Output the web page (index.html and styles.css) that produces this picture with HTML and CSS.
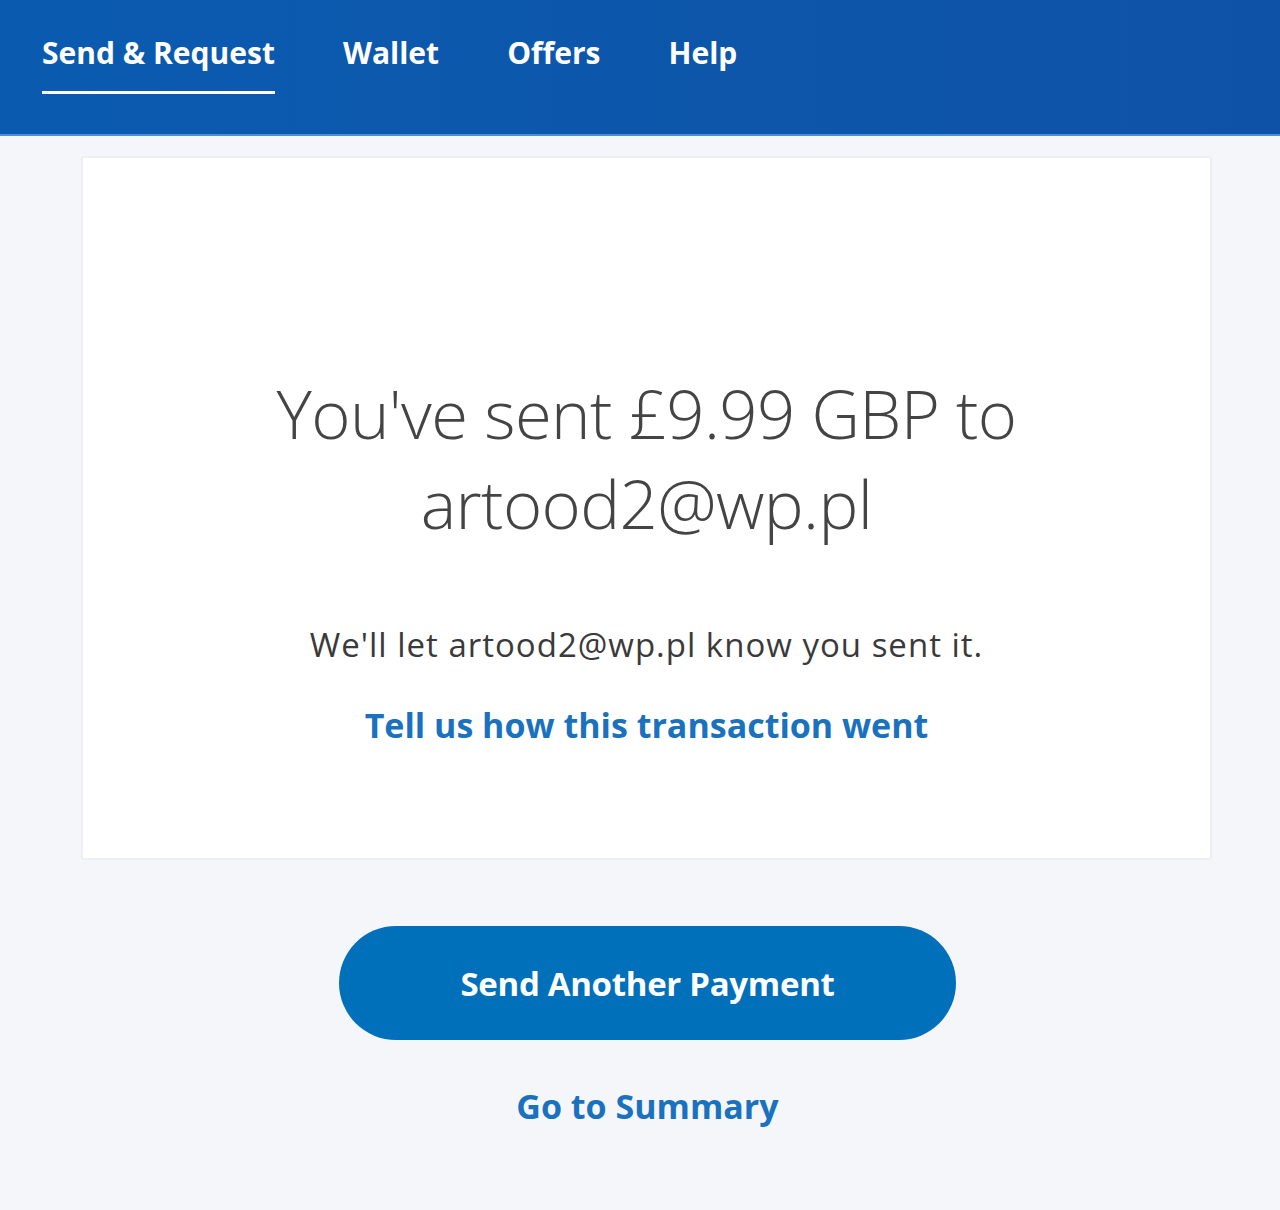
FILE: index.html
```html
<!DOCTYPE html>
<html lang="en">
<head>
<meta charset="utf-8">
<title>Payment sent</title>
<link rel="stylesheet" href="styles.css">
</head>
<body>
<header class="topbar">
  <nav class="nav">
    <a class="nav-item active" href="#">Send &amp; Request</a>
    <a class="nav-item" href="#">Wallet</a>
    <a class="nav-item" href="#">Offers</a>
    <a class="nav-item" href="#">Help</a>
  </nav>
</header>
<main class="main">
  <section class="card">
    <h1 class="headline">You've sent £9.99 GBP to<br>artood2@wp.pl</h1>
    <p class="note">We'll let artood2@wp.pl know you sent it.</p>
    <a class="feedback" href="#">Tell us how this transaction went</a>
  </section>
  <div class="actions">
    <a class="btn-primary" href="#">Send Another Payment</a>
    <a class="summary" href="#">Go to Summary</a>
  </div>
</main>
</body>
</html>
```
FILE: styles.css
```css
* { box-sizing: border-box; }
html, body { margin: 0; padding: 0; }
body {
  background: #f5f6fa;
  font-family: "Open Sans", "Noto Sans", sans-serif;
  width: 1280px;
  min-height: 1210px;
}
a { text-decoration: none; }

.topbar {
  height: 136px;
  background: linear-gradient(90deg, #0a5bb0 0%, #0d56aa 60%, #0e52a7 100%);
  border-bottom: 2px solid #4b8fd6;
}
.nav {
  display: flex;
  gap: 68px;
  padding-left: 42px;
  height: 100%;
}
.nav-item {
  color: #fff;
  font-weight: 700;
  font-size: 30px;
  line-height: 1;
  padding-top: 38px;
  height: 94px;
  letter-spacing: 0;
}
.nav-item.active {
  border-bottom: 3px solid #fff;
}

.main {
  padding-top: 21px;
}
.card {
  margin-left: 82px;
  width: 1129px;
  height: 702px;
  background: #fff;
  box-shadow: 0 0 2px rgba(0,0,0,0.08);
  border: 1px solid #eceef2;
  display: flex;
  flex-direction: column;
  align-items: center;
  padding-top: 210px;
}
.headline {
  margin: 0;
  font-weight: 300;
  font-size: 67px;
  line-height: 90px;
  color: #444;
  text-align: center;
  letter-spacing: -0.6px;
}
.note {
  margin: 77px 0 0;
  font-size: 33px;
  line-height: 40px;
  color: #3a3a3a;
  letter-spacing: 1px;
}
.feedback {
  margin-top: 40px;
  font-size: 34px;
  line-height: 40px;
  font-weight: 700;
  color: #1a72bf;
}

.actions {
  display: flex;
  flex-direction: column;
  align-items: center;
  padding-top: 67px;
  padding-left: 15px;
}
.btn-primary {
  width: 617px;
  height: 114px;
  border-radius: 57px;
  background: #0070ba;
  color: #fff;
  font-size: 33px;
  font-weight: 700;
  display: flex;
  align-items: center;
  justify-content: center;
  letter-spacing: -0.3px;
}
.summary {
  margin-top: 46px;
  font-size: 34px;
  font-weight: 700;
  color: #1a72bf;
  line-height: 40px;
}
```
